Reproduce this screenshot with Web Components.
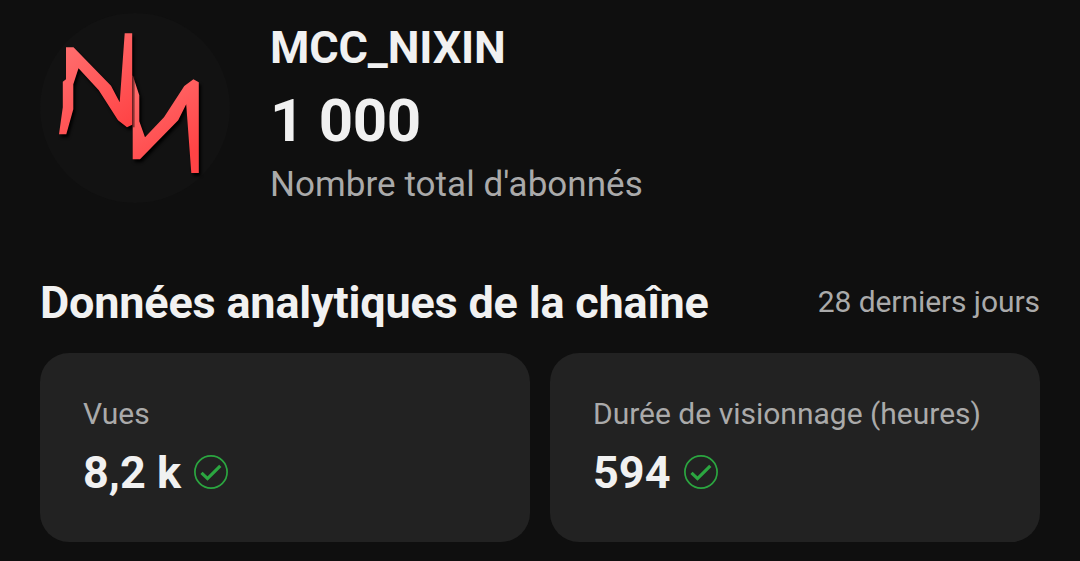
<!DOCTYPE html>
<html lang="fr">
<head>
<meta charset="utf-8">
<title>Statistiques de la chaîne</title>
<style>
html, body {
    margin: 0;
    height: 100%;
    background: #0f0f0f;
    overflow: hidden;
}
</style>
</head>
<body>
<channel-dashboard></channel-dashboard>

<script>
const avatarTemplate = document.createElement('template')
avatarTemplate.innerHTML = `<style>
:host {
    display: block;
    flex: none;
    width: 190px;
    height: 190px;
    border-radius: 50%;
    background: #121212;
}
svg {
    display: block;
    filter: drop-shadow(2px 3px 1.5px #000);
}
</style>
<svg width="190" height="190" viewBox="40 12.7 190 190">
  <defs>
    <linearGradient id="left" gradientUnits="userSpaceOnUse" x1="60" y1="45" x2="130" y2="125">
      <stop offset="0" stop-color="#ff7070"/><stop offset="1" stop-color="#ff4345"/>
    </linearGradient>
    <linearGradient id="right" gradientUnits="userSpaceOnUse" x1="145" y1="85" x2="190" y2="155">
      <stop offset="0" stop-color="#ff6a6a"/><stop offset="1" stop-color="#ff4345"/>
    </linearGradient>
  </defs>
  <path fill="url(#right)" d="M132.7 75L139.3 95V121L145 137L164 117L184.3 85.7L193.4 79L198.8 82V172.8H191.3L186.2 104L178.2 120L140 158.9H132.7Z"/>
  <path fill="none" stroke="#3a1111" stroke-opacity=".6" stroke-width="2" d="M133.6 76V127"/>
  <path fill="url(#left)" d="M66 47H73.5L111 85.5L119.7 102L124.7 33H132.2V124.5L127 127L118 120L98.8 90L78.5 68L73.3 84V109L66.3 134H59L62.8 107V81.5L66 79Z"/>
</svg>`;

class ChannelAvatar extends HTMLElement {
    constructor() {
        super();
        this.attachShadow({ mode: 'open' });
        this.shadowRoot.appendChild(avatarTemplate.content.cloneNode(true));
    }
}

const headerTemplate = document.createElement('template')
headerTemplate.innerHTML = `<style>
:host {
    display: flex;
    gap: 40px;
}
.info {
    padding-top: 7.5px;
    white-space: nowrap;
}
.name {
    font-size: 45px;
    line-height: 56px;
    font-weight: 700;
    letter-spacing: -0.15px;
}
.count {
    font-size: 60px;
    line-height: 89px;
    font-weight: 700;
    letter-spacing: -0.35px;
}
.label {
    padding-top: 1px;
    font-size: 35px;
    line-height: 38px;
    letter-spacing: 0.05px;
    color: #aaa;
}
</style>
<channel-avatar></channel-avatar>
<div class="info">
  <div class="name"><slot name="name"></slot></div>
  <div class="count"><slot name="count"></slot></div>
  <div class="label"><slot></slot></div>
</div>`;

class ChannelHeader extends HTMLElement {
    constructor() {
        super();
        this.attachShadow({ mode: 'open' });
        this.shadowRoot.appendChild(headerTemplate.content.cloneNode(true));
    }
}

const cardTemplate = document.createElement('template')
cardTemplate.innerHTML = `<style>
:host {
    display: block;
    box-sizing: border-box;
    height: 189px;
    padding: 43px 43px 0;
    border-radius: 29px;
    background: #222;
    white-space: nowrap;
}
.label {
    font-size: 30px;
    line-height: 36px;
    color: #aaa;
}
.row {
    display: flex;
    align-items: center;
    gap: 13.4px;
    margin-top: 13px;
}
.value {
    font-size: 45px;
    line-height: 55px;
    font-weight: 700;
}
svg {
    flex: none;
    margin-bottom: 1px;
}
</style>
<div class="label"><slot name="label"></slot></div>
<div class="row">
  <span class="value"><slot></slot></span>
  <svg width="34" height="34" viewBox="0 0 34 34" fill="none" stroke="#2ba640">
    <circle cx="17" cy="17" r="16.1" stroke-width="1.7"/>
    <path d="M7.5 17.8L13.5 23.6L26.3 10.8" stroke-width="3.2"/>
  </svg>
</div>`;

class StatCard extends HTMLElement {
    constructor() {
        super();
        this.attachShadow({ mode: 'open' });
        this.shadowRoot.appendChild(cardTemplate.content.cloneNode(true));
    }
}

const dashboardTemplate = document.createElement('template')
dashboardTemplate.innerHTML = `<style>
:host {
    display: block;
    box-sizing: border-box;
    height: 100%;
    padding: 12.5px 40px 0;
    font-family: Roboto, "Liberation Sans", sans-serif;
    color: #f1f1f1;
}
.heading {
    display: flex;
    justify-content: space-between;
    align-items: center;
    margin-top: 71px;
    height: 54px;
    white-space: nowrap;
}
h2 {
    margin: 0;
    padding-top: 2px;
    font-size: 45px;
    line-height: 54px;
    font-weight: 700;
    letter-spacing: -0.19px;
}
.period {
    font-size: 30px;
    line-height: 36px;
    letter-spacing: -0.07px;
    color: #aaa;
}
.cards {
    display: grid;
    grid-template-columns: 1fr 1fr;
    gap: 20px;
    margin-top: 24px;
}
</style>
<channel-header>
  <span slot="name">MCC_NIXIN</span>
  <span slot="count">1 000</span>
  Nombre total d'abonnés
</channel-header>
<div class="heading">
  <h2>Données analytiques de la chaîne</h2>
  <span class="period">28 derniers jours</span>
</div>
<div class="cards">
  <stat-card><span slot="label">Vues</span>8,2 k</stat-card>
  <stat-card><span slot="label">Durée de visionnage (heures)</span>594</stat-card>
</div>`;

class ChannelDashboard extends HTMLElement {
    constructor() {
        super();
        this.attachShadow({ mode: 'open' });
        this.shadowRoot.appendChild(dashboardTemplate.content.cloneNode(true));
    }
}

window.customElements.define('channel-avatar', ChannelAvatar);
window.customElements.define('channel-header', ChannelHeader);
window.customElements.define('stat-card', StatCard);
window.customElements.define('channel-dashboard', ChannelDashboard);
</script>
</body>
</html>
